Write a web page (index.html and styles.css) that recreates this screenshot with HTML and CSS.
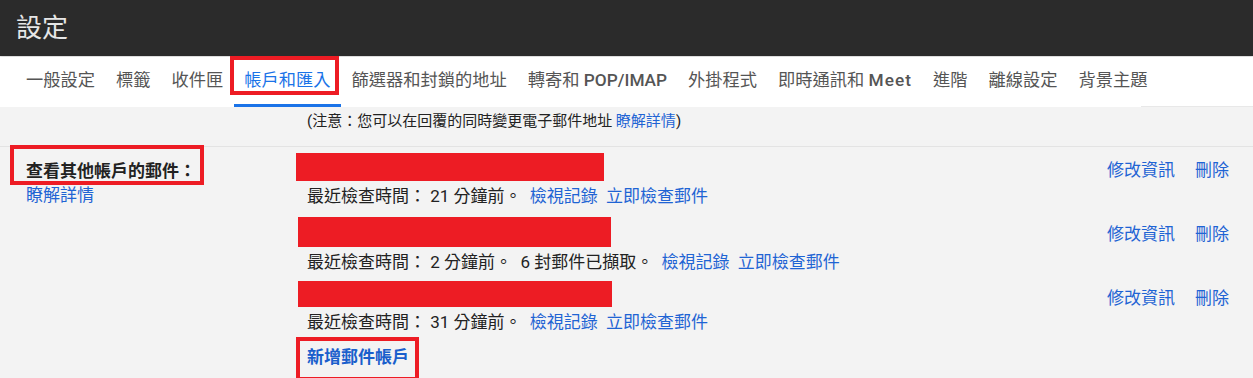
FILE: index.html
```html
<!DOCTYPE html>
<html lang="zh-Hant">
<head>
  <meta charset="UTF-8">
  <meta name="viewport" content="width=device-width, initial-scale=1.0">
  <title>設定</title>
  <link rel="stylesheet" href="styles.css">
</head>
<body>
  <div id="app">
    <div id="header">
      <h1>設定</h1>
    </div>

    <div id="tabs">
      <ul class="tab-list">
        <li class="tab">一般設定</li>
        <li class="tab">標籤</li>
        <li class="tab">收件匣</li>
        <li class="tab active marked mark-tab">帳戶和匯入</li>
        <li class="tab">篩選器和封鎖的地址</li>
        <li class="tab">轉寄和 <span class="latin">POP/IMAP</span></li>
        <li class="tab">外掛程式</li>
        <li class="tab">即時通訊和 <span class="latin wide">Meet</span></li>
        <li class="tab">進階</li>
        <li class="tab">離線設定</li>
        <li class="tab">背景主題</li>
      </ul>
    </div>

    <div id="settings">
      <div class="note">(注意：您可以在回覆的同時變更電子郵件地址 <a href="#">瞭解詳情</a>)</div>

      <div class="setting-row">
        <div class="setting-label">
          <span class="label-text marked mark-label">查看其他帳戶的郵件：</span>
          <a href="#">瞭解詳情</a>
        </div>

        <div class="setting-body">
          <div class="account">
            <div class="account-info">
              <div class="redacted r1"></div>
              <div class="status">最近檢查時間： 21 分鐘前。 <a href="#">檢視記錄</a> <a href="#">立即檢查郵件</a></div>
            </div>
            <div class="account-actions">
              <a href="#">修改資訊</a>
              <a href="#">刪除</a>
            </div>
          </div>

          <div class="account">
            <div class="account-info">
              <div class="redacted r2"></div>
              <div class="status">最近檢查時間： 2 分鐘前。&nbsp; 6 封郵件已擷取。 <a href="#">檢視記錄</a> <a href="#">立即檢查郵件</a></div>
            </div>
            <div class="account-actions">
              <a href="#">修改資訊</a>
              <a href="#">刪除</a>
            </div>
          </div>

          <div class="account">
            <div class="account-info">
              <div class="redacted r3"></div>
              <div class="status">最近檢查時間： 31 分鐘前。 <a href="#">檢視記錄</a> <a href="#">立即檢查郵件</a></div>
            </div>
            <div class="account-actions">
              <a href="#">修改資訊</a>
              <a href="#">刪除</a>
            </div>
          </div>

          <div class="add-account">
            <a href="#" class="marked mark-add">新增郵件帳戶</a>
          </div>
        </div>
      </div>
    </div>
  </div>
</body>
</html>
```

FILE: styles.css
```css
body {
    font-family: Roboto, "Noto Sans CJK TC", sans-serif;
    margin: 0;
    padding: 0;
    background-color: #f3f3f3;
    color: #222222;
    overflow: hidden;
}

a {
    color: #1f64d4;
    text-decoration: none;
}

#app {
    display: flex;
    flex-direction: column;
    height: 100vh;
}

#header {
    background-color: #2b2b2b;
    height: 56px;
    padding-left: 16px;
    display: flex;
    align-items: center;
    box-shadow: 0px 1px 3px rgba(0, 0, 0, 0.15);
}

#header h1 {
    margin: 0;
    font-size: 26px;
    font-weight: 400;
    color: #e6e6e6;
    line-height: 56px;
}

#tabs {
    background-color: #ffffff;
    height: 50px;
    margin-top: 1px;
    border-bottom: 1px solid #e8e8e8;
    box-sizing: border-box;
}

.tab-list {
    display: flex;
    list-style: none;
    margin: 0;
    padding: 0 0 0 15.5px;
    height: 50px;
    width: 1141px;
    background-color: #ffffff;
    box-sizing: border-box;
}

.tab {
    position: relative;
    padding: 0 10.5px;
    font-size: 17.25px;
    line-height: 47px;
    color: #555555;
    white-space: nowrap;
    border-bottom: 3px solid transparent;
}

.tab .latin {
    font-weight: 500;
}

.tab .latin.wide {
    letter-spacing: 1px;
}

.tab.active {
    color: #1a73e8;
    border-bottom-color: #1a73e8;
}

/* red annotation boxes */
.marked {
    position: relative;
}

.marked::after {
    content: "";
    position: absolute;
    border: 4px solid #ed1c24;
    pointer-events: none;
}

.mark-tab::after {
    top: -1px;
    left: -4px;
    right: 2px;
    bottom: 9px;
}

.mark-label::after {
    top: -14px;
    left: -16px;
    right: -8px;
    bottom: -2px;
}

.mark-add::after {
    top: -10px;
    left: -11px;
    right: -10px;
    bottom: -14px;
}

#settings {
    flex-grow: 1;
}

.note {
    font-size: 15px;
    line-height: 20px;
    padding: 4px 0 15px 307px;
    border-bottom: 1px solid #e3e3e3;
}

.setting-row {
    display: flex;
}

.setting-label {
    width: 281px;
    padding: 12px 0 0 26px;
    font-size: 17px;
    line-height: 24px;
    display: flex;
    flex-direction: column;
    align-items: flex-start;
}

.label-text {
    font-weight: 700;
    color: #222222;
}

.setting-body {
    flex-grow: 1;
    padding: 6px 24px 0 0;
}

.account {
    display: flex;
    justify-content: space-between;
    height: 64px;
}

.redacted {
    background-color: #ed1c24;
    height: 28px;
    margin-left: -11px;
}

.r1 {
    width: 308px;
}

.r2 {
    width: 313px;
    height: 30px;
    margin-left: -9px;
}

.r3 {
    width: 314px;
    height: 26px;
    margin-left: -9px;
}

.status {
    font-size: 17px;
    line-height: 22px;
    margin-top: 4px;
    white-space: nowrap;
}

.status a {
    margin-left: 4px;
}

.account-actions {
    display: flex;
    gap: 20px;
    font-size: 17px;
    line-height: 22px;
    padding-top: 6px;
}

.add-account {
    margin-top: 1px;
    font-size: 17px;
    line-height: 22px;
}

.add-account a {
    font-weight: 700;
    color: #1a5fcc;
}
```
